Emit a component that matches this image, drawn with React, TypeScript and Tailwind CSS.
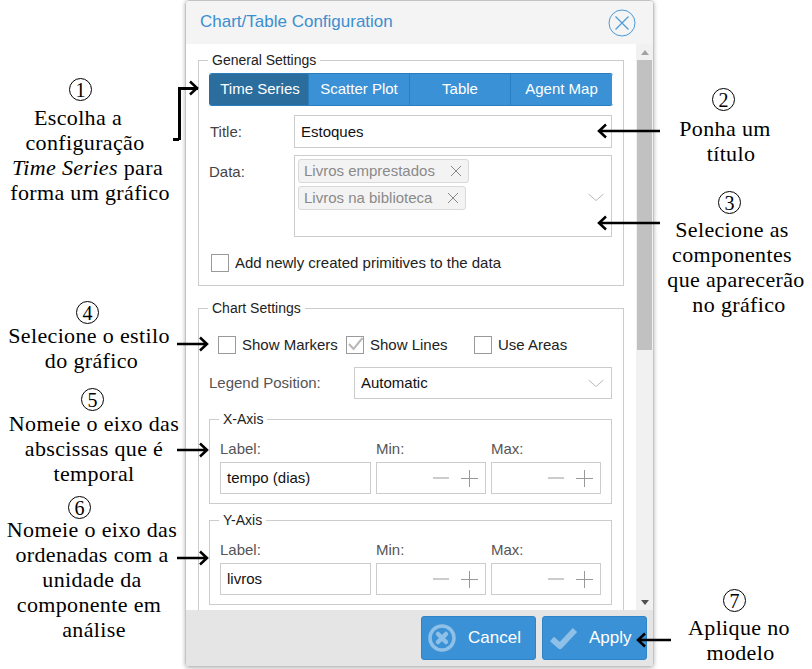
import React from 'react';

const serif = "font-['Liberation_Serif',serif] text-[22px] leading-[25px] text-black tracking-[0.35px] whitespace-nowrap";

function Tab({ label, active, w }: { label: string; active?: boolean; w: string }) {
  return (
    <div
      className={`${w} flex items-center justify-center text-white text-[15px] border-r border-[#2a7dbf] last:border-r-0 ${
        active ? 'bg-[#2b6e9e] pl-[3px]' : 'bg-[#3b91d5]'
      }`}
    >
      {label}
    </div>
  );
}

function Chevron() {
  return (
    <svg width="16" height="9" viewBox="0 0 16 9" fill="none" stroke="#bbbbbb" strokeWidth="1">
      <path d="M0.5 1 L8 7.5 L15.5 1" />
    </svg>
  );
}

function Tag({ label, w }: { label: string; w: string }) {
  return (
    <div className={`${w} h-6 flex items-center justify-between pl-[5px] pr-[6px] bg-[#f3f3f3] border border-[#d9d9d9] rounded-[3px] text-[#8a8a8a] text-[15px]`}>
      <span>{label}</span>
      <svg width="12" height="12" viewBox="0 0 12 12" stroke="#888" strokeWidth="1">
        <path d="M1 1 L11 11 M11 1 L1 11" />
      </svg>
    </div>
  );
}

function Check({ checked, className }: { checked?: boolean; className?: string }) {
  return (
    <div className={`w-[18px] h-[18px] border border-[#9a9a9a] relative shrink-0 ${className ?? ''}`}>
      {checked && (
        <svg className="absolute left-0 top-[-1px]" width="17" height="17" viewBox="0 0 17 17" fill="none" stroke="#b8b8b8" strokeWidth="2">
          <path d="M2 8 L6.5 13 L15.5 2" />
        </svg>
      )}
    </div>
  );
}

function Spinner() {
  return (
    <div className="flex-1 h-8 border border-[#cccccc] flex items-center justify-end pr-[7px] gap-[12px]">
      <svg width="16" height="2" viewBox="0 0 16 2" stroke="#999">
        <path d="M0 1 H16" />
      </svg>
      <svg width="17" height="17" viewBox="0 0 17 17" stroke="#999">
        <path d="M0 8.5 H17 M8.5 0 V17" />
      </svg>
    </div>
  );
}

function Axis({ title, value, className }: { title: string; value: string; className?: string }) {
  return (
    <fieldset className={`border border-[#cccccc] h-[93px] px-[10px] ${className ?? ''}`}>
      <legend className="-ml-px px-[4px] text-[14px] leading-[16px] text-[#222]">{title}</legend>
      <div className="flex gap-[5px] mt-[13px] text-[15px] text-[#555] leading-[17px]">
        <div className="w-[151px]">Label:</div>
        <div className="w-[110px]">Min:</div>
        <div className="w-[110px]">Max:</div>
      </div>
      <div className="flex gap-[5px] mt-[5px]">
        <div className="w-[151px] h-8 shrink-0 border border-[#cccccc] flex items-center pl-[6px] pt-[1px] text-[15px] text-[#111]">{value}</div>
        <Spinner />
        <Spinner />
      </div>
    </fieldset>
  );
}

function ArrowLeft({ className, long }: { className: string; long?: boolean }) {
  return long ? (
    <svg className={`absolute ${className}`} width="63" height="16" viewBox="0 0 63 16" fill="none" stroke="#000" strokeWidth="2.5">
      <path d="M63 8 H2 M9 1.5 L2 8 L9 14.5" />
    </svg>
  ) : (
    <svg className={`absolute ${className}`} width="35" height="16" viewBox="0 0 35 16" fill="none" stroke="#000" strokeWidth="2.5">
      <path d="M35 8 H2 M9 1.5 L2 8 L9 14.5" />
    </svg>
  );
}

function ArrowRight({ className }: { className: string }) {
  return (
    <svg className={`absolute ${className}`} width="32" height="16" viewBox="0 0 32 16" fill="none" stroke="#000" strokeWidth="2.5">
      <path d="M0 8 H30 M23 1.5 L30 8 L23 14.5" />
    </svg>
  );
}

function Num({ n, className }: { n: number; className: string }) {
  return (
    <div className={`absolute w-[23px] h-[23px] rounded-full border-[1.5px] border-black flex items-center justify-center font-['Liberation_Serif',serif] text-[20px] leading-none text-black ${className}`}>
      {n}
    </div>
  );
}

export default function App() {
  return (
    <div className="relative w-[812px] h-[669px] bg-white overflow-hidden font-['Liberation_Sans',sans-serif]">
      <div className="ml-[185px] w-[469px] h-[667px] flex flex-col rounded-[4px] border border-[#c4c4c4] shadow-[0_1px_4px_rgba(0,0,0,0.3)] overflow-hidden">
        <div className="h-[43px] shrink-0 bg-[#f4f4f4] flex items-center justify-between pl-[14px] pr-[17px]">
          <span className="text-[17px] text-[#3b8ed0] pb-[2px]">Chart/Table Configuration</span>
          <svg width="28" height="28" viewBox="0 0 28 28" fill="none" stroke="#4a9ad8" strokeWidth="1">
            <circle cx="14" cy="14" r="13" />
            <path d="M7.5 7.5 L20.5 20.5 M20.5 7.5 L7.5 20.5" strokeWidth="1.2" />
          </svg>
        </div>

        <div className="flex-1 min-h-0 flex bg-white">
          <div className="w-[449px] shrink-0 overflow-hidden pl-[12px] pr-[11px] pt-[8px]">
            <fieldset className="border border-[#cccccc] h-[234px] px-[10px]">
              <legend className="-ml-px px-[4px] text-[14px] leading-[16px] text-[#222]">General Settings</legend>
              <div className="flex h-[33px] mt-[5px] rounded-[3px] overflow-hidden border-y border-[#2a7dbf]">
                <Tab label="Time Series" active w="w-[100px]" />
                <Tab label="Scatter Plot" w="w-[101px]" />
                <Tab label="Table" w="w-[101px]" />
                <Tab label="Agent Map" w="w-[101px]" />
              </div>
              <div className="flex mt-[9px] items-center">
                <div className="w-[85px] text-[15px] text-[#444] pl-[1px] pt-[1px]">Title:</div>
                <div className="w-[318px] h-[33px] border border-[#cccccc] flex items-center pl-[6px] pt-[1px] text-[15px] text-[#111]">Estoques</div>
              </div>
              <div className="flex mt-[7px]">
                <div className="w-[85px] text-[15px] text-[#444] pt-[6px]">Data:</div>
                <div className="relative w-[318px] h-[82px] border border-[#cccccc] pl-[3px] pt-[3px] flex flex-col gap-[3px]">
                  <Tag label="Livros emprestados" w="w-[171px]" />
                  <Tag label="Livros na biblioteca" w="w-[168px]" />
                  <div className="absolute right-[7px] top-[37px]">
                    <Chevron />
                  </div>
                </div>
              </div>
              <div className="flex items-center mt-[15px] ml-[2px] gap-[6px]">
                <Check />
                <span className="text-[15px] text-[#222]">Add newly created primitives to the data</span>
              </div>
            </fieldset>

            <fieldset className="border border-[#cccccc] mt-[14px] px-[10px] h-[330px]">
              <legend className="-ml-px px-[4px] text-[14px] leading-[16px] text-[#222]">Chart Settings</legend>
              <div className="flex items-center h-[22px] mt-[18px] ml-[9px] text-[15px] text-[#222]">
                <Check />
                <span className="ml-[6px] w-[104px]">Show Markers</span>
                <Check checked />
                <span className="ml-[6px] w-[104px]">Show Lines</span>
                <Check />
                <span className="ml-[6px]">Use Areas</span>
              </div>
              <div className="flex items-center mt-[11px]">
                <div className="w-[145px] text-[15px] text-[#555] pt-[1px]">Legend Position:</div>
                <div className="w-[258px] h-8 border border-[#cccccc] flex items-center justify-between pl-[6px] pr-[7px] pt-[1px] text-[15px] text-[#111]">
                  <span>Automatic</span>
                  <Chevron />
                </div>
              </div>
              <Axis title="X-Axis" value="tempo (dias)" className="mt-[12px] w-[403px]" />
              <Axis title="Y-Axis" value="livros" className="mt-[8px] w-[403px]" />
            </fieldset>
          </div>

          <div className="w-[17px] ml-auto bg-[#f1f1f1] flex flex-col items-center shrink-0">
            <div className="h-[16px] flex items-center justify-center">
              <div className="w-0 h-0 border-x-[4px] border-x-transparent border-b-[5px] border-b-[#a3a3a3]" />
            </div>
            <div className="w-[15px] h-[290px] bg-[#c1c1c1]" />
            <div className="flex-1" />
            <div className="h-[16px] flex items-center justify-center">
              <div className="w-0 h-0 border-x-[4px] border-x-transparent border-t-[5px] border-t-[#505050]" />
            </div>
          </div>
        </div>

        <div className="h-[56px] shrink-0 bg-[#e5e5e5] flex justify-end items-start pt-[6px] pr-[6px] gap-[6px]">
          <div className="w-[115px] h-[44px] rounded-[3px] bg-[#3b91d5] border border-[#2f84c8] flex items-center pl-[6px] text-white text-[17px]">
            <svg width="28" height="28" viewBox="0 0 28 28" className="shrink-0">
              <circle cx="14" cy="14" r="12" fill="none" stroke="#8fc0e8" strokeWidth="3.5" />
              <path d="M10 10 L18 18 M18 10 L10 18" stroke="#8fc0e8" strokeWidth="4.5" strokeLinecap="round" />
            </svg>
            <span className="ml-[12px]">Cancel</span>
          </div>
          <div className="w-[105px] h-[44px] rounded-[3px] bg-[#3b91d5] border border-[#2f84c8] flex items-center pl-[6px] text-white text-[17px]">
            <svg width="30" height="24" viewBox="0 0 30 24" fill="none" className="shrink-0">
              <path d="M3 13 L11 20 L26 4" stroke="#8fc0e8" strokeWidth="6" strokeLinejoin="round" />
            </svg>
            <span className="ml-[10px]">Apply</span>
          </div>
        </div>
      </div>

      {/* anotacoes */}
      <div className="absolute left-[178px] top-[87px] w-[20px] h-[53px] border-l-[3px] border-t-[3px] border-black" />
      <div className="absolute left-[173px] top-[138px] w-[6px] h-[3px] bg-black" />
      <svg className="absolute left-[188px] top-[80px]" width="11" height="16" viewBox="0 0 11 16" fill="none" stroke="#000" strokeWidth="2.5">
        <path d="M2 1.5 L9 8 L2 14.5" />
      </svg>
      <ArrowLeft long className="left-[597px] top-[123px]" />
      <ArrowLeft long className="left-[597px] top-[215px]" />
      <ArrowRight className="left-[177px] top-[336px]" />
      <ArrowRight className="left-[177px] top-[442px]" />
      <ArrowRight className="left-[177px] top-[550px]" />
      <ArrowLeft className="left-[636px] top-[632px]" />

      <Num n={1} className="left-[69px] top-[78px]" />
      <div className={`absolute left-[0px] top-[105px] w-[180px] text-center ${serif}`}>
        <div className="pr-[24px]">Escolha a</div>
        <div className="pr-[10px]">configuração</div>
        <div className="pr-[5px]"><i>Time Series</i> para</div>
        <div>forma um gráfico</div>
      </div>

      <Num n={2} className="left-[712px] top-[88px]" />
      <div className={`absolute left-[660px] top-[116px] w-[140px] text-center ${serif}`}>
        <div className="pr-[10px]">Ponha um</div>
        <div className="pl-[2px]">título</div>
      </div>

      <Num n={3} className="left-[718px] top-[191px]" />
      <div className={`absolute left-[660px] top-[217px] w-[152px] text-center ${serif}`}>
        <div className="pr-[8px]">Selecione as</div>
        <div className="pr-[8px]">componentes</div>
        <div>que aparecerão</div>
        <div className="pl-[6px]">no gráfico</div>
      </div>

      <Num n={4} className="left-[76px] top-[301px]" />
      <div className={`absolute left-[0px] top-[323px] w-[178px] text-center ${serif}`}>
        <div>Selecione o estilo</div>
        <div className="pl-[5px]">do gráfico</div>
      </div>

      <Num n={5} className="left-[81px] top-[388px]" />
      <div className={`absolute left-[0px] top-[411px] w-[188px] text-center ${serif}`}>
        <div>Nomeie o eixo das</div>
        <div>abscissas que é</div>
        <div>temporal</div>
      </div>

      <Num n={6} className="left-[68px] top-[496px]" />
      <div className={`absolute left-[0px] top-[517px] w-[184px] text-center ${serif}`}>
        <div>Nomeie o eixo das</div>
        <div>ordenadas com a</div>
        <div>unidade da</div>
        <div className="pr-[6px]">componente em</div>
        <div className="pl-[4px]">análise</div>
      </div>

      <Num n={7} className="left-[723px] top-[589px]" />
      <div className={`absolute left-[670px] top-[615px] w-[138px] text-center ${serif}`}>
        <div>Aplique no</div>
        <div className="pl-[3px]">modelo</div>
      </div>
    </div>
  );
}
